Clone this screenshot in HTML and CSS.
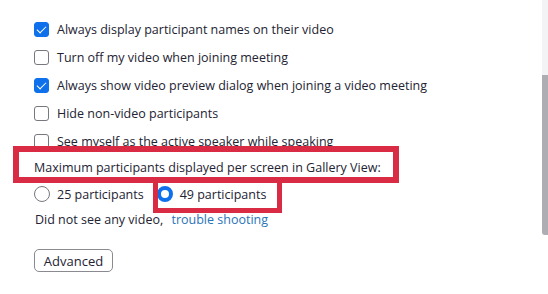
FILE: index.html
```html
<!DOCTYPE html>
<html lang="en">
<head>
    <meta charset="UTF-8">
    <meta name="viewport" content="width=device-width, initial-scale=1.0">
    <title>Video Settings</title>
    <link rel="stylesheet" href="styles.css">
</head>
<body>
<div class="window">
    <div class="settings">
        <div class="option"><span class="check checked"></span>Always display participant names on their video</div>
        <div class="option"><span class="check"></span>Turn off my video when joining meeting</div>
        <div class="option"><span class="check checked"></span>Always show video preview dialog when joining a video meeting</div>
        <div class="option"><span class="check"></span>Hide non-video participants</div>
        <div class="option"><span class="check"></span>See myself as the active speaker while speaking</div>

        <div class="label">Maximum participants displayed per screen in Gallery View:</div>

        <div class="radios">
            <div class="radio-item"><span class="radio"></span>25 participants</div>
            <div class="radio-item"><span class="radio on"></span>49 participants</div>
        </div>

        <div class="help">Did not see any video, <a href="#" class="link">trouble shooting</a></div>

        <button class="advanced">Advanced</button>

        <!-- annotation boxes -->
        <div class="mark mark-label"></div>
        <div class="mark mark-radio"></div>
    </div>

    <div class="scrollbar">
        <div class="track"></div>
        <div class="thumb"></div>
    </div>
</div>
</body>
</html>
```

FILE: styles.css
```css
body {
    margin: 0;
    background-color: #fff;
    font-family: "Open Sans", "Noto Sans", Arial, sans-serif;
    font-size: 12.5px;
    color: #232333;
}

.window {
    display: flex;
    height: 294px;
    overflow: hidden;
}

.settings {
    position: relative;
    flex: 1;
    padding: 15px 0 0 34px;
}

.option {
    display: flex;
    align-items: center;
    height: 28px;
    white-space: nowrap;
}

.check {
    box-sizing: border-box;
    width: 15px;
    height: 15px;
    margin-right: 8px;
    border: 1px solid #77777f;
    border-radius: 3px;
    flex-shrink: 0;
    position: relative;
}

.check.checked {
    background-color: #0e71eb;
    border-color: #0e71eb;
}

.check.checked::after {
    content: "";
    position: absolute;
    left: 4px;
    top: 1px;
    width: 4px;
    height: 8px;
    border: solid #fff;
    border-width: 0 1.5px 1.5px 0;
    transform: rotate(45deg);
}

.label {
    height: 26px;
    line-height: 26px;
    white-space: nowrap;
}

.radios {
    display: flex;
    align-items: center;
    height: 26px;
}

.radio-item {
    display: flex;
    align-items: center;
    margin-right: 13px;
    white-space: nowrap;
}

.radio {
    box-sizing: border-box;
    width: 16px;
    height: 16px;
    margin-right: 7px;
    border: 1px solid #77777f;
    border-radius: 50%;
}

.radio.on {
    border: 4px solid #0e71eb;
}

.help {
    height: 26px;
    line-height: 26px;
    padding-left: 1px;
    white-space: nowrap;
}

.link {
    color: #2a74b8;
    text-decoration: none;
    margin-left: 5px;
}

.advanced {
    margin-top: 16px;
    height: 23px;
    width: 79px;
    padding: 0;
    font-family: inherit;
    font-size: 13px;
    color: #232333;
    background-color: #fff;
    border: 1px solid #8a8a90;
    border-radius: 5px;
}

.mark {
    position: absolute;
    box-sizing: border-box;
    border: 5px solid #d92b44;
}

.mark-label {
    left: 13px;
    top: 146px;
    width: 386px;
    height: 37px;
    border-width: 6px;
}

.mark-radio {
    left: 153px;
    top: 177px;
    width: 129px;
    height: 36px;
}

.scrollbar {
    width: 6px;
    display: flex;
    flex-direction: column;
}

.track {
    height: 75px;
    background-color: #f3f3f5;
}

.thumb {
    height: 160px;
    background-color: #adadb3;
    border-radius: 0 0 0 3px;
}
```
